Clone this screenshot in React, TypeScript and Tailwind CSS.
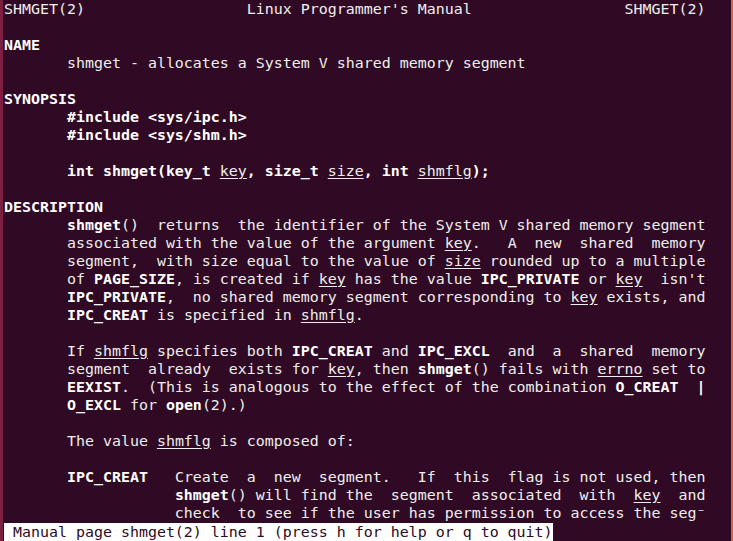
import React from "react";

// « » = bold, ‹ › = underline (man page attributes)
const lines: string[] = [
  "SHMGET(2)                  Linux Programmer's Manual                 SHMGET(2)",
  "",
  "«NAME»",
  "       shmget - allocates a System V shared memory segment",
  "",
  "«SYNOPSIS»",
  "       «#include <sys/ipc.h>»",
  "       «#include <sys/shm.h>»",
  "",
  "       «int shmget(key_t »‹key›«, size_t »‹size›«, int »‹shmflg›«);»",
  "",
  "«DESCRIPTION»",
  "       «shmget»()  returns  the identifier of the System V shared memory segment",
  "       associated with the value of the argument ‹key›.   A  new  shared  memory",
  "       segment,  with size equal to the value of ‹size› rounded up to a multiple",
  "       of «PAGE_SIZE», is created if ‹key› has the value «IPC_PRIVATE» or ‹key›  isn't",
  "       «IPC_PRIVATE»,  no shared memory segment corresponding to ‹key› exists, and",
  "       «IPC_CREAT» is specified in ‹shmflg›.",
  "",
  "       If ‹shmflg› specifies both «IPC_CREAT» and «IPC_EXCL»  and  a  shared  memory",
  "       segment  already  exists for ‹key›, then «shmget»() fails with ‹errno› set to",
  "       «EEXIST».  (This is analogous to the effect of the combination «O_CREAT»  «|»",
  "       «O_EXCL» for «open»(2).)",
  "",
  "       The value ‹shmflg› is composed of:",
  "",
  "       «IPC_CREAT»   Create  a  new  segment.   If  this  flag is not used, then",
  "                   «shmget»() will find the  segment  associated  with  ‹key›  and",
  "                   check  to see if the user has permission to access the seg⁻",
];

function renderLine(line: string, key: number) {
  const parts: React.ReactNode[] = [];
  const re = /«([^»]*)»|‹([^›]*)›|([^«‹]+)/g;
  let m: RegExpExecArray | null;
  let i = 0;
  while ((m = re.exec(line)) !== null) {
    if (m[1] !== undefined) {
      parts.push(
        <b key={i++} className="font-bold text-white">
          {m[1]}
        </b>
      );
    } else if (m[2] !== undefined) {
      parts.push(
        <u key={i++} className="underline underline-offset-2">
          {m[2]}
        </u>
      );
    } else {
      parts.push(<span key={i++}>{m[3]}</span>);
    }
  }
  return (
    <div key={key} className="h-[18px]">
      {parts.length ? parts : " "}
    </div>
  );
}

export default function App() {
  return (
    <div className="w-[733px] h-[541px] overflow-hidden bg-[#300a24] border-l-[3px] border-l-[#7d1f3e] border-r-2 border-r-[#e0603a] flex flex-col">
      <div
        className="pl-px text-[14.95px] leading-[18px] text-[#eeeeec] whitespace-pre"
        style={{ fontFamily: '"DejaVu Sans Mono", monospace' }}
      >
        {lines.map((l, i) => renderLine(l, i))}
        <div className="h-[18px] mt-px">
          <span className="bg-[#ffffff] text-[#300a24]">
            {" Manual page shmget(2) line 1 (press h for help or q to quit)"}
          </span>
        </div>
      </div>
    </div>
  );
}
